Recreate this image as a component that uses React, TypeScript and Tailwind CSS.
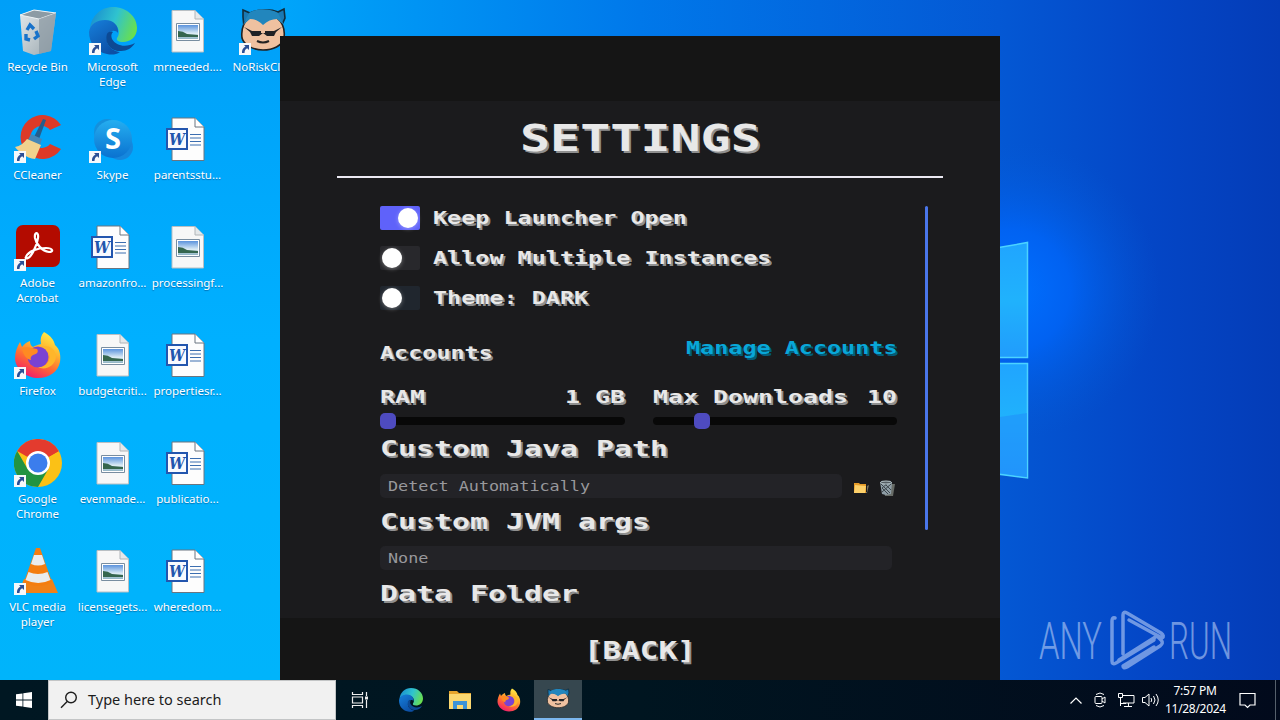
import type { ReactNode } from "react";

type IconKind =
    | "bin" | "edge" | "image" | "norisk" | "ccleaner" | "skype"
    | "word" | "acrobat" | "firefox" | "chrome" | "vlc";

interface Shortcut {
    kind: IconKind;
    label: string;
    linked?: boolean;
}

const columns: Shortcut[][] = [
    [
        { kind: "bin", label: "Recycle Bin" },
        { kind: "ccleaner", label: "CCleaner", linked: true },
        { kind: "acrobat", label: "Adobe Acrobat", linked: true },
        { kind: "firefox", label: "Firefox", linked: true },
        { kind: "chrome", label: "Google Chrome", linked: true },
        { kind: "vlc", label: "VLC media player", linked: true },
    ],
    [
        { kind: "edge", label: "Microsoft Edge", linked: true },
        { kind: "skype", label: "Skype", linked: true },
        { kind: "word", label: "amazonfro..." },
        { kind: "image", label: "budgetcriti..." },
        { kind: "image", label: "evenmade..." },
        { kind: "image", label: "licensegets..." },
    ],
    [
        { kind: "image", label: "mrneeded...." },
        { kind: "word", label: "parentsstu..." },
        { kind: "image", label: "processingf..." },
        { kind: "word", label: "propertiesr..." },
        { kind: "word", label: "publicatio..." },
        { kind: "word", label: "wheredom..." },
    ],
    [{ kind: "norisk", label: "NoRiskCli...", linked: true }],
];

function Gradients() {
    return (
        <svg className="absolute h-0 w-0">
            <defs>
                <linearGradient id="edgeTop" x1="0" y1="0.3" x2="1" y2="0.6">
                    <stop offset="0" stopColor="#1a8fd0" />
                    <stop offset="0.5" stopColor="#2fc3cf" />
                    <stop offset="1" stopColor="#6be04a" />
                </linearGradient>
                <linearGradient id="edgeLow" x1="0" y1="0" x2="0.6" y2="1">
                    <stop offset="0" stopColor="#1680dc" />
                    <stop offset="1" stopColor="#0c4fa5" />
                </linearGradient>
                <linearGradient id="foxBody" x1="0.8" y1="0" x2="0.3" y2="1">
                    <stop offset="0" stopColor="#fff24a" />
                    <stop offset="0.35" stopColor="#ffb52e" />
                    <stop offset="0.65" stopColor="#ff6a33" />
                    <stop offset="1" stopColor="#f0196f" />
                </linearGradient>
                <linearGradient id="skypeFill" x1="0" y1="0" x2="0" y2="1">
                    <stop offset="0" stopColor="#25aef0" />
                    <stop offset="1" stopColor="#0a72d0" />
                </linearGradient>
                <linearGradient id="photo" x1="0" y1="0" x2="0" y2="1">
                    <stop offset="0" stopColor="#5b93dd" />
                    <stop offset="0.6" stopColor="#dcecf5" />
                    <stop offset="1" stopColor="#8fb4c4" />
                </linearGradient>
                <linearGradient id="binSide" x1="0" y1="0" x2="1" y2="1">
                    <stop offset="0" stopColor="#e3e9ec" />
                    <stop offset="1" stopColor="#9aa7ae" />
                </linearGradient>
            </defs>
        </svg>
    );
}

function EdgeArt() {
    return (
        <>
            <path d="M1 22C2 9 12 0 24 0c14 0 24 10 24 21 0 9-7 14-14 14-5 0-7-2-6-4 4-5 2-14-8-16C12 13 4 17 1 22z" fill="url(#edgeTop)" />
            <path d="M0 25c1-8 8-12 16-12 9 0 14 6 13 13-2-3-8-3-10 1-4 9 3 17 12 18-4 3-9 3-13 2C7 45 0 36 0 25z" fill="url(#edgeLow)" />
            <path d="M18 27c-3 10 5 18 14 17 6 0 11-3 14-8-9 5-19 3-23-4-1-3-1-5 1-7-3-1-5 0-6 2z" fill="#0d4a94" />
        </>
    );
}

function FirefoxArt() {
    return (
        <>
            <path d="M30 1c7 4 10 8 11 13 5 4 6 11 5 17-2 10-11 16-22 16S2 39 1 28c0-7 2-12 5-17l2 5c2-3 5-5 8-6 0 3 1 5 3 6 3-2 8-3 8-3-1-5 0-9 3-12z" fill="url(#foxBody)" />
            <circle cx="24" cy="26" r="10.5" fill="#7a42d2" />
            <path d="M8 17c5-2 10 0 15 1 2 3 0 5-4 6-2 1-3 3-2 5-5-1-8-5-9-12z" fill="#ff8a22" />
            <path d="M24 16c9-1 14 6 11 13-2 5-7 8-12 7 9 4 18-1 19-10 0-8-7-13-18-10z" fill="#ffb62a" />
        </>
    );
}

function SnorlaxArt() {
    return (
        <>
            <path d="M4 10V3l7 3C19 2 32 2 39 5l6-3 1 9-4 9H5z" fill="#1b79b4" stroke="#102d3d" strokeWidth="1.6" />
            <path d="M24 15c4-3 9-5 14-4 6 5 8 13 7 20-2 8-11 12-21 12S5 38 3 31c-1-8 1-15 7-20 5-1 10 1 14 4z" fill="#efc1a0" stroke="#222" strokeWidth="1.6" />
            <path d="M4 18l7-6c5 0 9 2 13 6 4-4 9-6 14-6l7 6-6-12C31 1 17 1 10 6z" fill="#2286bd" />
            <path d="M5 20l8 4h9v2h4v-2h9l8-4-6 5-2 4h-7l-4-3-4 3h-7l-2-4z" fill="#202124" />
            <path d="M18 34q6 3 12 0" fill="none" stroke="#222" strokeWidth="2" />
        </>
    );
}

const art: Record<IconKind, ReactNode> = {
    bin: (
        <>
            <path d="M6 8l14-5 22 3-5 38-17 4-11-4z" fill="url(#binSide)" />
            <path d="M6 8l14-5 22 3-17 6z" fill="#8c9ba4" stroke="#eef3f5" />
            <path d="M25 12l17-6-5 38-12 3z" fill="#8997a1" opacity=".7" />
            <g fill="none" stroke="#1872ca" strokeWidth="3.4">
                <path d="M13 23l3-5 4 4M22 24l2 5-4 3M16 33l-4-1 0-5" />
            </g>
        </>
    ),
    edge: <EdgeArt />,
    norisk: <SnorlaxArt />,
    firefox: <FirefoxArt />,
    ccleaner: (
        <>
            <path d="M47 10A22 22 0 1 0 47 34l-11-5a11 11 0 1 1 0-14z" fill="#dc3a28" />
            <path d="M29 4l3 1-7 19-5-2z" fill="#255d8c" />
            <path d="M17 19l11 5-2 6-12-5z" fill="#4587b7" />
            <path d="M13 24l14 6-6 14C12 43 5 37 1 32c5-1 9-4 12-8z" fill="#f1d28e" />
        </>
    ),
    skype: (
        <>
            <circle cx="18" cy="17" r="13" fill="#1590dc" />
            <circle cx="31" cy="32" r="13" fill="#1587dd" />
            <circle cx="24" cy="24" r="19" fill="url(#skypeFill)" />
            <text x="24" y="34" textAnchor="middle" fontFamily="Open Sans, sans-serif" fontWeight="bold" fontSize="29" fill="#fff">S</text>
        </>
    ),
    image: (
        <>
            <path d="M8 3.5h23l8.5 8.500V45H8z" fill="#f7f7f7" stroke="#b9bfc3" />
            <path d="M31 3.500V12h8.500" fill="#e5e8ea" stroke="#b0b5b8" />
            <path d="M12.500 16.500h23v17h-23z" fill="#fff" stroke="#788da0" />
            <path d="M14 18h20v14H14z" fill="url(#photo)" />
            <path d="M14 24q5 0 9 3l11 1v2H14z" fill="#35664e" />
        </>
    ),
    word: (
        <>
            <path d="M8 3h23l9 9v33.500H8z" fill="#fdfdfd" stroke="#6b7580" />
            <path d="M31 3v9h9" fill="#fff" stroke="#6b7580" />
            <path d="M26 19.500h11m-11 3.500h11m-11 3.500h11m-11 3.500h11" stroke="#3c6eb0" />
            <path d="M3 14h20v20H3z" fill="#f8faff" stroke="#2356ae" strokeWidth="2" />
            <text x="13" y="30" textAnchor="middle" fontFamily="DejaVu Serif, serif" fontWeight="bold" fontStyle="italic" fontSize="16" textLength="16" lengthAdjust="spacingAndGlyphs" fill="#2155ad">W</text>
        </>
    ),
    acrobat: (
        <>
            <rect x="2" y="2" width="44" height="42" rx="7" fill="#b30b00" />
            <path d="M12 34c2-6 12-9 20-9 7 0 8 4 3 4-7-1-13-8-14-14-1-7 4-6 3 0-1 8-7 19-10 20-2 1-3 0-2-1z" fill="none" stroke="#fff" strokeWidth="2.200" />
        </>
    ),
    chrome: (
        <>
            <circle cx="24" cy="24" r="24" fill="#fbc116" />
            <path d="M24 24L3.200 12A24 24 0 0 1 44.800 12z" fill="#e33b2e" />
            <path d="M24 12h20.800L24 24z" fill="#e33b2e" />
            <path d="M3.200 12A24 24 0 0 0 24 48l10.400-18L24 24 13.600 30z" fill="#229342" />
            <circle cx="24" cy="24" r="12" fill="#fff" />
            <circle cx="24" cy="24" r="9.500" fill="#3b7ded" />
        </>
    ),
    vlc: (
        <>
            <path d="M10 32h28l6 14H4z" fill="#f08118" />
            <path d="M22 1h4l12 34q-14 8-28 0z" fill="#f47d10" />
            <path d="M20 8h8l3 9q-7 3-14 0z" fill="#e9ecee" />
            <path d="M14.500 25q9.500 4 19 0l3 8q-12 6-25 0z" fill="#e9ecee" />
        </>
    ),
};

function DesktopIcon({ kind, label, linked }: Shortcut) {
    return (
        <div className="flex h-[108px] w-[75px] flex-col items-center">
            <div className="relative h-[52px] w-12">
                <svg viewBox="0 0 48 48" className="h-12 w-12">{art[kind]}</svg>
                {linked && (
                    <svg viewBox="0 0 12 12" className="absolute bottom-1 left-0 h-3 w-3">
                        <path d="M0 0h12v12H0z" fill="#f5f8fb" />
                        <path d="M5 2h5v5L8.200 5.200Q5.500 6.500 5.500 10H3Q2.500 5.500 6.500 3.500z" fill="#2b4f96" />
                    </svg>
                )}
            </div>
            <div className="w-[73px] text-center font-['Noto_Sans',sans-serif] text-[11.5px] leading-[15px] text-white [text-shadow:0_1px_1px_rgba(0,40,90,0.45)]">
                {label}
            </div>
        </div>
    );
}

function Wallpaper() {
    return (
        <svg viewBox="0 0 1280 680" className="absolute inset-0 h-[680px] w-[1280px]">
            <defs>
                <linearGradient id="sky" x1="0" x2="1">
                    <stop offset="0" stopColor="#00a8fc" />
                    <stop offset="0.22" stopColor="#00a5fa" />
                    <stop offset="0.5" stopColor="#0078ea" />
                    <stop offset="0.78" stopColor="#0458d4" />
                    <stop offset="0.9" stopColor="#0446c6" />
                    <stop offset="1" stopColor="#043cb7" />
                </linearGradient>
                <linearGradient id="leftGlow" x1="0" y1="0" x2="0" y2="1">
                    <stop offset="0" stopColor="#009ff8" />
                    <stop offset="0.5" stopColor="#00b0ff" />
                    <stop offset="1" stopColor="#00b4fb" />
                </linearGradient>
                <radialGradient id="halo" cx="1010" cy="290" r="150" gradientUnits="userSpaceOnUse">
                    <stop offset="0" stopColor="#0070ff" />
                    <stop offset="0.4" stopColor="#0066fa" stopOpacity="0.8" />
                    <stop offset="1" stopColor="#0458d4" stopOpacity="0" />
                </radialGradient>
                <linearGradient id="pane" x1="0" y1="0" x2="0" y2="1">
                    <stop offset="0" stopColor="#20a5ff" />
                    <stop offset="0.5" stopColor="#20b2fc" />
                    <stop offset="1" stopColor="#219cfc" />
                </linearGradient>
            </defs>
            <path d="M0 0h1280v680H0z" fill="url(#sky)" />
            <path d="M0 0h281v680H0z" fill="url(#leftGlow)" />
            <path d="M850 100h430v400H850z" fill="url(#halo)" />
            <g fill="url(#pane)" stroke="#4bd3ff" strokeWidth="1.5">
                <path d="M990 249l37.500-6.500v115H990z" />
                <path d="M990 363.500h37.500v114.500L990 473z" />
            </g>
            <path d="M1000 417l27-4v64l-27-4z" fill="#218ffa" opacity=".6" />
        </svg>
    );
}

function AnyRunLogo() {
    return (
        <svg viewBox="0 0 200 70" className="absolute bottom-1 right-[45px] h-[70px] w-[200px] opacity-60">
            <g fill="#b7cdf6" fontFamily="Roboto, sans-serif" fontSize="52" fontWeight="300">
                <text x="4" y="53" textLength="63" lengthAdjust="spacingAndGlyphs">ANY</text>
                <text x="134" y="53" textLength="63" lengthAdjust="spacingAndGlyphs">RUN</text>
            </g>
            <g fill="none" stroke="#b7cdf6" strokeWidth="3.500" strokeLinejoin="round" strokeLinecap="round">
                <path d="M80 12q-3-1-3 3v40q0 4 4 2l38-23" />
                <path d="M88 48V9q0-4 4-2l34 20q4 3 1 5l-33-18" />
                <path d="M84 54l38-24 4 4q3 3-1 6L92 61q-4 2-4-1l31-19" />
            </g>
        </svg>
    );
}

interface PixelTextProps {
    children: string;
    size: number;
    advance: number;
    className?: string;
}

// Wide monospaced lettering: every glyph takes exactly `advance` pixels.
function PixelText({ children, size, advance, className = "" }: PixelTextProps) {
    return (
        <span
            className={`block shrink-0 whitespace-pre font-['DejaVu_Sans_Mono',monospace] ${className}`}
            style={{ width: children.length * advance, fontSize: size }}
        >
            <span className="block w-max origin-left" style={{ transform: `scaleX(${advance / (size * 0.602)})` }}>
                {children}
            </span>
        </span>
    );
}

const solid = "font-bold text-[#e8e8e8] [text-shadow:1.500px_2px_0_#8f8f8f]";

function Toggle({ label, on, track }: { label: string; on?: boolean; track: string }) {
    return (
        <div className="flex h-6 items-center gap-[13px]">
            <div className={`flex h-6 w-10 items-center rounded-xs px-0.5 ${track} ${on ? "justify-end" : ""}`}>
                <div className="h-5 w-5 rounded-full bg-white shadow-[0_1px_4px_rgba(255,255,255,0.35)]" />
            </div>
            <PixelText size={17} advance={14.1} className={`leading-6 ${solid}`}>{label}</PixelText>
        </div>
    );
}

function Slider({ label, value, thumb }: { label: string; value: string; thumb: string }) {
    return (
        <div className="flex-1">
            <div className="flex h-4 justify-between">
                <PixelText size={18} advance={15} className={`leading-4 ${solid}`}>{label}</PixelText>
                <PixelText size={18} advance={15} className={`leading-4 ${solid}`}>{value}</PixelText>
            </div>
            <div className="mt-3 h-2 rounded-sm bg-[#080808]">
                <div className={`relative -top-1 h-4 w-4 rounded-[5px] bg-[#4e4bc0] ${thumb}`} />
            </div>
        </div>
    );
}

function Heading({ children }: { children: string }) {
    return (
        <PixelText size={22} advance={18} className={`h-[26px] leading-[26px] ${solid}`}>
            {children}
        </PixelText>
    );
}

function Field({ text, width }: { text: string; width: string }) {
    return (
        <div className={`h-6 rounded-[5px] bg-[#232327] px-2 ${width}`}>
            <PixelText size={13.5} advance={10.1} className="leading-6 text-[#98989c]">{text}</PixelText>
        </div>
    );
}

function Launcher() {
    return (
        <div className="absolute left-[280px] top-9 flex h-[644px] w-[720px] flex-col bg-[#1b1b1d]">
            <div className="h-[65px] shrink-0 bg-[#151515]" />
            <div className="flex min-h-0 flex-1 flex-col overflow-hidden">
                <div className="mx-[57px] flex h-[77px] shrink-0 justify-center border-b-2 border-[#ebe9f2]">
                    <PixelText size={38} advance={30.1} className={`leading-[75px] ${solid}`}>SETTINGS</PixelText>
                </div>
                <div className="flex pl-[100px] pt-7">
                    <div className="w-[517px]">
                        <div className="flex flex-col gap-4">
                            <Toggle label="Keep Launcher Open" on track="bg-[#5f62fa]" />
                            <Toggle label="Allow Multiple Instances" track="bg-[#28282c]" />
                            <Toggle label="Theme: DARK" track="bg-[#20262e]" />
                        </div>
                        <div className="mt-[31px] flex h-6 items-start justify-between">
                            <PixelText size={17} advance={14.1} className={`leading-6 ${solid}`}>Accounts</PixelText>
                            <PixelText size={17} advance={14.1} className="font-bold leading-3.5 text-[#08a7d8] [text-shadow:1.500px_2px_0_#045c78]">
                                Manage Accounts
                            </PixelText>
                        </div>
                        <div className="mt-6 flex h-10 gap-7">
                            <Slider label="RAM" value="1 GB" thumb="" />
                            <Slider label="Max Downloads" value="10" thumb="left-[41px]" />
                        </div>
                        <div className="mt-[7px]">
                            <Heading>Custom Java Path</Heading>
                        </div>
                        <div className="mt-3 flex items-center">
                            <Field text="Detect Automatically" width="w-[462px]" />
                            <svg viewBox="0 0 16 14" className="ml-[11px] mt-1 h-3.5 w-4">
                                <path d="M3 12h11l2-8-2 1v6z" fill="#77705e" />
                                <path d="M1 2h5l1 1h6v9H1z" fill="#e69b28" />
                                <path d="M2 4l11 1-1 7H1z" fill="#fcd06a" />
                            </svg>
                            <svg viewBox="0 0 16 16" className="ml-2.5 mt-1 h-4 w-4">
                                <path d="M4 4h12l-2 12H6z" fill="#686c67" />
                                <path d="M1 2l6-1 6 1-1 12-5 1-4-1z" fill="#8e9da5" />
                                <path d="M2 4l9 9M5 3l7 7M3 8l6 6M12 4l-9 8M9 3L3 8" stroke="#3d464c" />
                                <ellipse cx="7" cy="2.500" rx="5.500" ry="1.500" fill="#535c61" stroke="#b7c5ca" />
                            </svg>
                        </div>
                        <div className="mt-[11px]">
                            <Heading>Custom JVM args</Heading>
                        </div>
                        <div className="mt-[11px]">
                            <Field text="None" width="w-[512px]" />
                        </div>
                        <div className="mt-[11px]">
                            <Heading>Data Folder</Heading>
                        </div>
                    </div>
                    <div className="ml-7 h-[324px] w-[3px] rounded-xs bg-[#4a76ea]" />
                </div>
            </div>
            <div className="flex h-[62px] shrink-0 justify-center bg-[#151515] pt-[3px]">
                <PixelText size={24} advance={18.6} className={`leading-[60px] ${solid}`}>[BACK]</PixelText>
            </div>
        </div>
    );
}

function Taskbar() {
    return (
        <div className="flex h-10 bg-linear-to-r from-[#001722] via-[#001520] to-[#020a1c] font-['Noto_Sans',sans-serif]">
            <div className="flex w-12 items-center justify-center">
                <svg viewBox="0 0 16 16" className="h-4 w-4" fill="#fff">
                    <path d="M0 2.300l6.500-.9v6.200H0zM7.300 1.300L16 0v7.600H7.300zM0 8.400h6.500v6.200L0 13.700zM7.300 8.400H16V16l-8.700-1.200z" />
                </svg>
            </div>
            <div className="flex w-72 items-center border-x border-b border-t border-[#c3c5c6] bg-[#f1f1f1]">
                <svg viewBox="0 0 18 18" className="ml-[11px] h-[18px] w-[18px]" fill="none" stroke="#1d1d1d" strokeWidth="1.400">
                    <circle cx="11" cy="6.500" r="5.300" />
                    <path d="M7.200 10.500L1 16.700" />
                </svg>
                <span className="ml-2.5 text-[14.5px] text-[#1c1c1c]">Type here to search</span>
            </div>
            <div className="flex">
                <div className="flex w-12 items-center justify-center">
                    <svg viewBox="0 0 18 16" className="h-4 w-[18px]" fill="none" stroke="#eee" strokeWidth="1.200">
                        <path d="M1.500 0v2.500h10V0M1.500 5h10v6h-10zM1.500 16v-2.500h10V16M15.500 0v4M15.500 8v8" />
                        <path d="M14 4.500h3v3h-3z" fill="#eee" stroke="none" />
                    </svg>
                </div>
                <div className="ml-[3px] flex w-12 items-center justify-center">
                    <svg viewBox="0 0 48 48" className="h-6 w-6"><EdgeArt /></svg>
                </div>
                <div className="ml-px flex w-12 items-center justify-center">
                    <svg viewBox="0 0 22 20" className="h-5 w-[22px]">
                        <path d="M0 1h8l2 2h12v6H0z" fill="#e6a52c" />
                        <path d="M0 4h22v15H0z" fill="#fbd870" />
                        <path d="M4 19v-8h14v8h-4v-4H8v4z" fill="#3c93d6" />
                    </svg>
                </div>
                <div className="ml-px flex w-12 items-center justify-center">
                    <svg viewBox="0 0 48 48" className="h-6 w-6"><FirefoxArt /></svg>
                </div>
                <div className="ml-px flex w-12 items-center justify-center border-b-2 border-[#7cb7ee] bg-[#36474f]">
                    <svg viewBox="0 0 48 48" className="h-[22px] w-6" preserveAspectRatio="none"><SnorlaxArt /></svg>
                </div>
            </div>
            <div className="ml-auto flex items-center text-white">
                <svg viewBox="0 0 12 7" className="h-[7px] w-3" fill="none" stroke="#fff" strokeWidth="1.200"><path d="M.5 6.500L6 1l5.500 5.500" /></svg>
                <svg viewBox="0 0 12 16" className="ml-3 h-4 w-3" fill="none" stroke="#fff">
                    <rect x="1" y="4.500" width="7" height="7" rx="1" />
                    <path d="M8 7l3-2v6L8 9M2 2.500q4-3 8 0M2 13.500q4 3 8 0" />
                </svg>
                <svg viewBox="0 0 17 14" className="ml-3 h-3.5 w-[17px]" fill="none" stroke="#fff">
                    <path d="M5 2.500h11v7.500H5M2.500 5v8M10.500 10v3.500M6 13.500h8M.5.5h4v4h-4zM2.500 10.500H8" />
                </svg>
                <svg viewBox="0 0 17 14" className="ml-[7px] h-3.5 w-[17px]" fill="none" stroke="#fff">
                    <path d="M.5 4.500H3l4-3.500v12L3 9.500H.5zM9 5q1.500 2 0 4M11.500 3q3 4 0 8M14 1q4.500 6 0 12" />
                </svg>
                <div className="ml-1.5 w-[60px] text-center text-[12px] leading-[18px] tracking-[-0.3px]">
                    <div>7:57 PM</div>
                    <div>11/28/2024</div>
                </div>
                <svg viewBox="0 0 17 17" className="ml-3.5 mr-[19px] h-[17px] w-[17px]" fill="none" stroke="#fff" strokeWidth="1.200">
                    <path d="M1 1.500h15v11.500h-5l-2.500 2.500L6 13H1z" />
                </svg>
                <div className="mr-1 h-10 w-px bg-[#56606c]" />
            </div>
        </div>
    );
}

export default function App() {
    return (
        <div className="h-[720px] w-[1280px] overflow-hidden">
            <Gradients />
            <div className="relative h-[680px] overflow-hidden">
                <Wallpaper />
                <div className="relative flex pt-[7px]">
                    {columns.map((column, i) => (
                        <div key={i} className="flex flex-col">
                            {column.map((item) => (
                                <DesktopIcon key={item.label} {...item} />
                            ))}
                        </div>
                    ))}
                </div>
                <AnyRunLogo />
                <Launcher />
            </div>
            <Taskbar />
        </div>
    );
}
